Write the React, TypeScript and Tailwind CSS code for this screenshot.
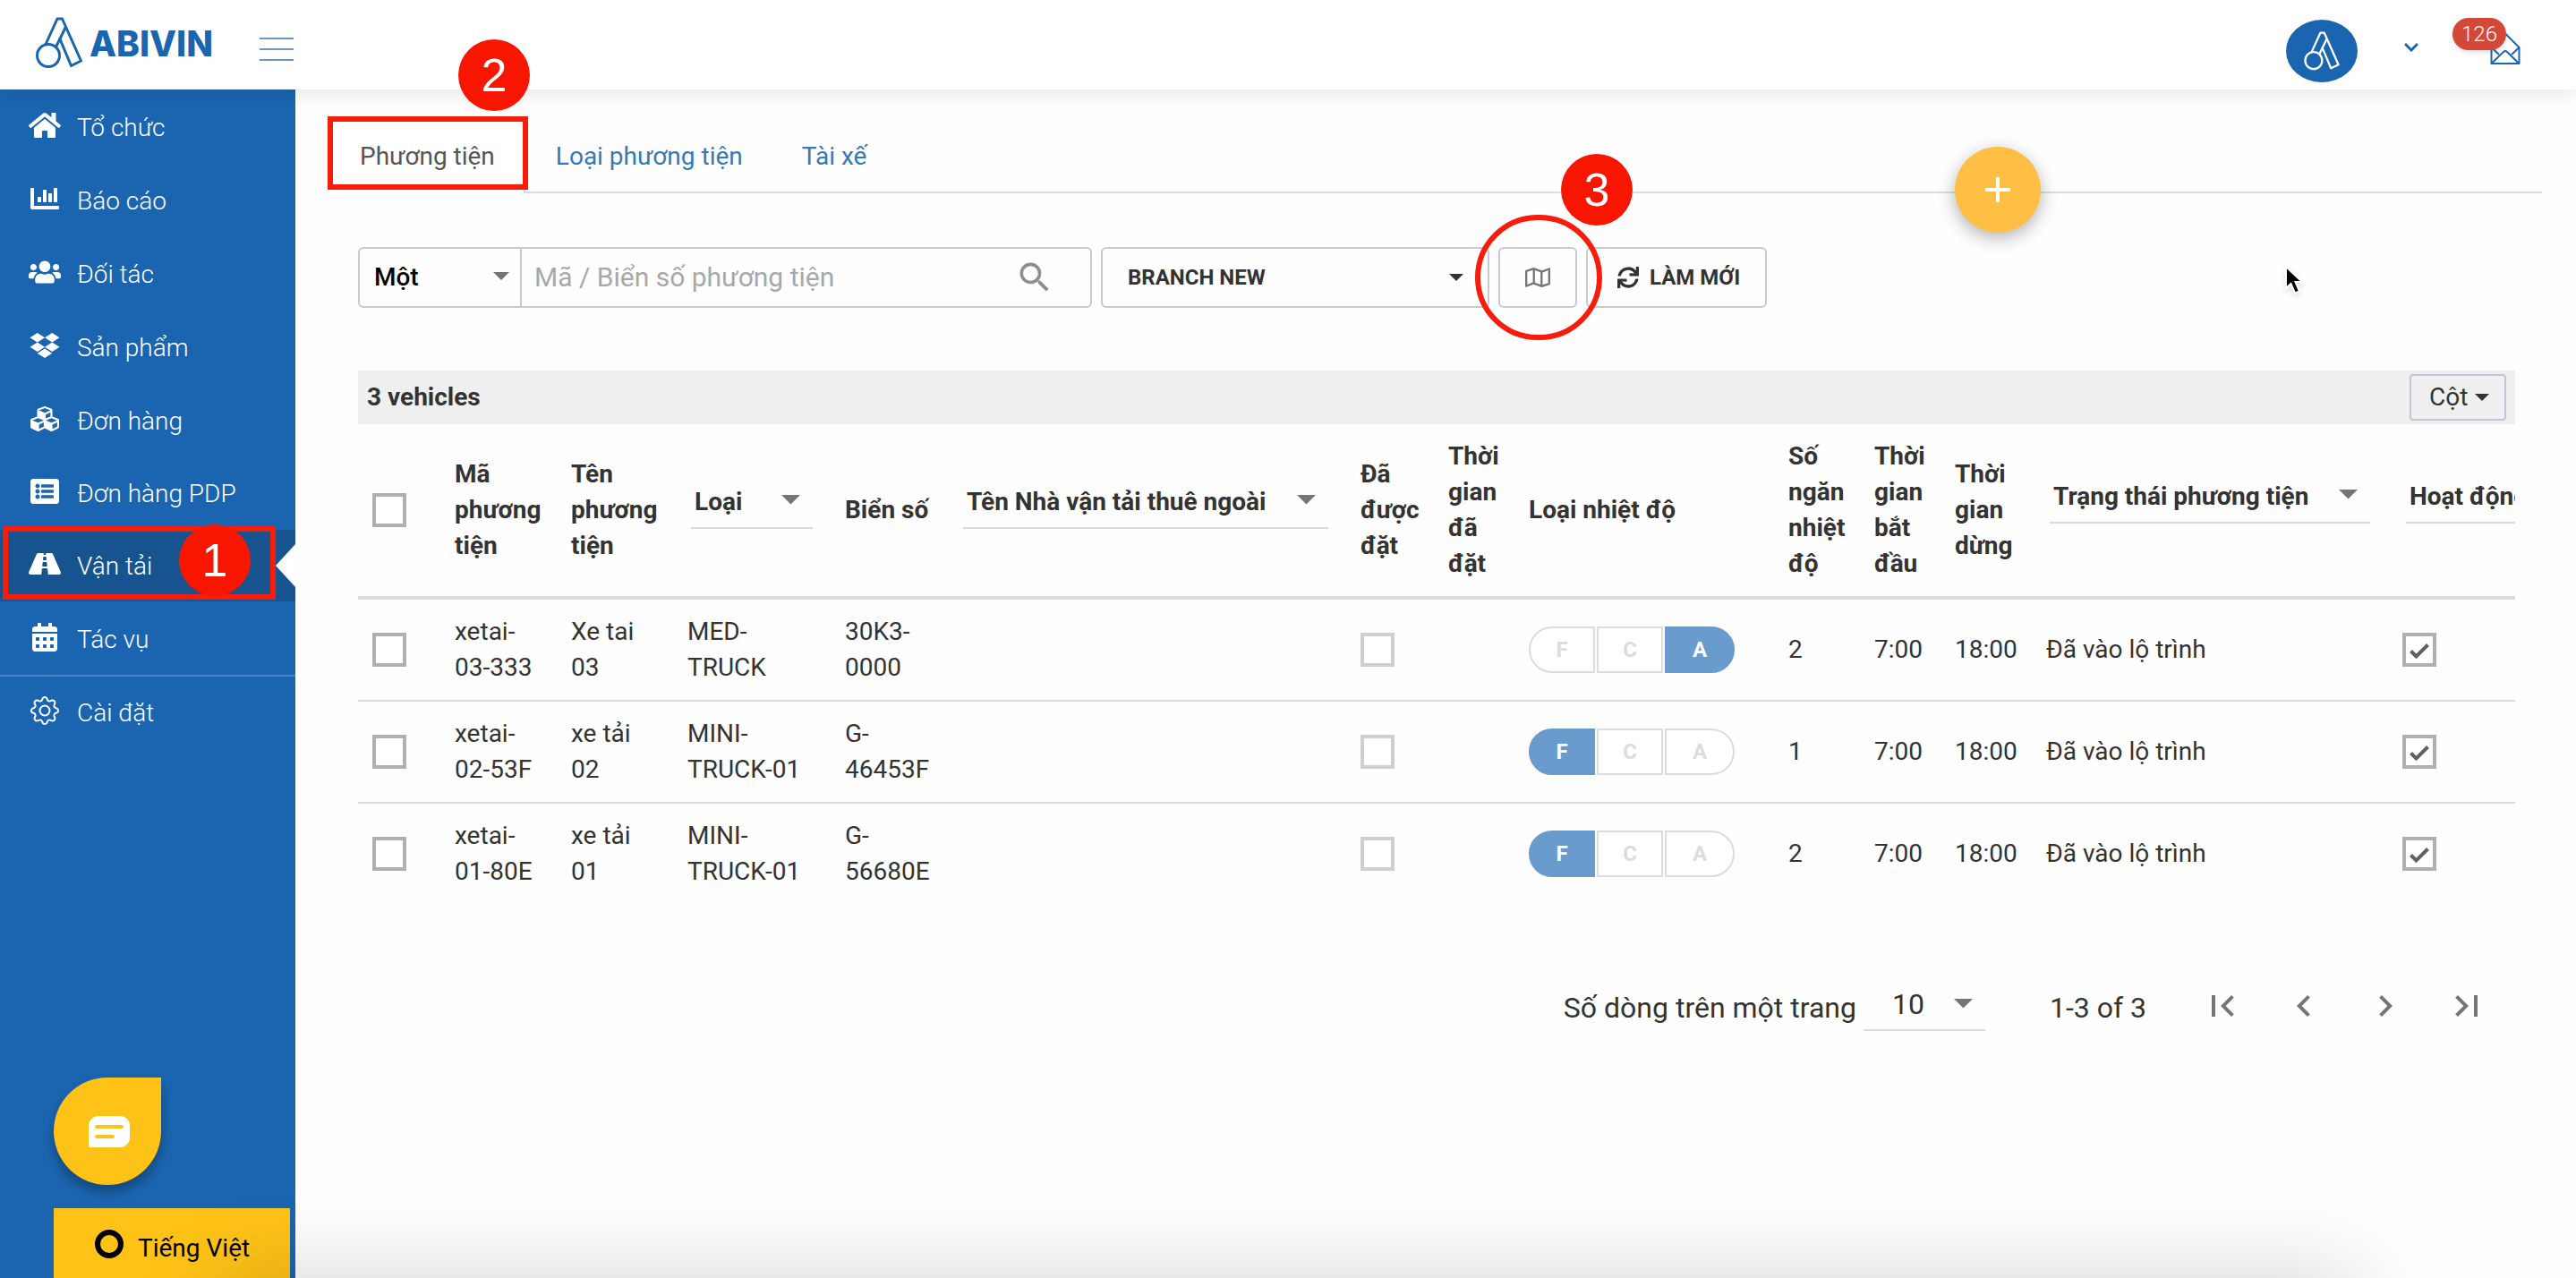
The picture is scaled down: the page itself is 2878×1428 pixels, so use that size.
import type { ReactNode } from "react";
import type { IconType } from "react-icons";
import {
  FaCalendarAlt,
  FaChartBar,
  FaChevronDown,
  FaCubes,
  FaDropbox,
  FaHome,
  FaListAlt,
  FaRegMap,
  FaRoad,
  FaSync,
  FaUsers,
} from "react-icons/fa";
import { BsGear } from "react-icons/bs";
import { MdAdd, MdChevronLeft, MdChevronRight, MdFirstPage, MdLastPage, MdSearch } from "react-icons/md";

type NavItem = { label: string; icon: IconType; active?: boolean; height?: string; divided?: boolean };

const navItems: NavItem[] = [
  { label: "Tổ chức", icon: FaHome },
  { label: "Báo cáo", icon: FaChartBar },
  { label: "Đối tác", icon: FaUsers },
  { label: "Sản phẩm", icon: FaDropbox },
  { label: "Đơn hàng", icon: FaCubes },
  { label: "Đơn hàng PDP", icon: FaListAlt, height: "h-20" },
  { label: "Vận tải", icon: FaRoad, active: true },
  { label: "Tác vụ", icon: FaCalendarAlt, divided: true },
  { label: "Cài đặt", icon: BsGear },
];

type Vehicle = {
  id: [string, string];
  name: [string, string];
  type: [string, string];
  plate: [string, string];
  temp: "F" | "C" | "A";
  compartments: number;
};

const vehicles: Vehicle[] = [
  { id: ["xetai-", "03-333"], name: ["Xe tai", "03"], type: ["MED-", "TRUCK"], plate: ["30K3-", "0000"], temp: "A", compartments: 2 },
  { id: ["xetai-", "02-53F"], name: ["xe tải", "02"], type: ["MINI-", "TRUCK-01"], plate: ["G-", "46453F"], temp: "F", compartments: 1 },
  { id: ["xetai-", "01-80E"], name: ["xe tải", "01"], type: ["MINI-", "TRUCK-01"], plate: ["G-", "56680E"], temp: "F", compartments: 2 },
];

function LogoMark({ className }: { className: string }) {
  return (
    <svg viewBox="0 0 52 58" className={className} fill="none" stroke="currentColor" strokeWidth="3" strokeLinejoin="round" aria-hidden="true">
      <circle cx="14" cy="43" r="12.500" />
      <path d="M11 30.500 L24 2 H29.500 L50.500 49 L39.500 54.500 L26.500 23.500" />
      <path d="M33.500 11 L22.500 33.500" />
    </svg>
  );
}

function Caret({ className }: { className: string }) {
  return (
    <svg viewBox="0 0 20 10" className={className} fill="currentColor" aria-hidden="true">
      <path d="M0 0h20L10 10z" />
    </svg>
  );
}

function Marker({ n, className }: { n: number; className: string }) {
  return (
    <span
      className={`pointer-events-none absolute z-20 flex size-20 items-center justify-center rounded-full bg-[#f81600] font-['Liberation_Sans',sans-serif] text-[52px] leading-none font-normal text-white ${className}`}
    >
      {n}
    </span>
  );
}

function Checkbox({ label, checked = false, disabled = false }: { label: string; checked?: boolean; disabled?: boolean }) {
  return (
    <span className="relative flex size-[38px]">
      <input
        type="checkbox"
        aria-label={label}
        defaultChecked={checked}
        disabled={disabled}
        className="peer size-[38px] appearance-none border-4 border-[#b0b0b0] bg-white disabled:border-[#cfcfcf]"
      />
      <svg viewBox="0 0 38 38" className="pointer-events-none absolute inset-0 hidden text-[#616161] peer-checked:block" fill="none" stroke="currentColor" strokeWidth="4" aria-hidden="true">
        <path d="M9.500 20.500 L15.500 26.500 L28.500 13.500" />
      </svg>
    </span>
  );
}

function HeaderSelect({ label, raised = false }: { label: string; raised?: boolean }) {
  return (
    <span className={`relative mx-1 block border-b-2 border-[#dcdcdc] ${raised ? "-mt-7" : "-mt-4"}`}>
      <select aria-label={label} className="block h-14 w-full appearance-none bg-transparent pl-1 font-bold">
        <option>{label}</option>
      </select>
      <Caret className="pointer-events-none absolute top-5 right-3.5 w-[21px] text-[#757575]" />
    </span>
  );
}

function TempPills({ value }: { value: Vehicle["temp"] }) {
  const shape = { F: "w-[74px] rounded-l-full", C: "w-[74px]", A: "w-[78px] rounded-r-full" };
  return (
    <span className="flex gap-0.5">
      {(["F", "C", "A"] as const).map((t) => (
        <button
          key={t}
          type="button"
          className={`h-[52px] border-2 text-2xl font-bold ${shape[t]} ${
            t === value ? "border-[#6a9bcd] bg-[#6a9bcd] text-white" : "border-[#dcdcdc] bg-white text-[#dcdcdc]"
          }`}
        >
          {t}
        </button>
      ))}
    </span>
  );
}

function Th({ children }: { children?: ReactNode }) {
  return <th className="p-4 text-left align-middle font-bold">{children}</th>;
}

function Td({ children }: { children?: ReactNode }) {
  return <td className="p-4 align-middle whitespace-nowrap">{children}</td>;
}

function Lines({ text }: { text: [string, string] }) {
  return (
    <>
      {text[0]}
      <br />
      {text[1]}
    </>
  );
}

function Header() {
  return (
    <header className="relative z-10 flex h-[100px] items-center bg-white pr-[62px] pl-10 text-[#1b65b0] shadow-[0_4px_20px_rgba(0,0,0,0.1)]">
      <a href="#home" className="flex items-center gap-2 pb-1" aria-label="ABIVIN">
        <LogoMark className="h-[58px] w-[52px]" />
        <span className="font-['Inter',sans-serif] text-[39px] leading-none font-extrabold">ABIVIN</span>
      </a>
      <button type="button" aria-label="Menu" className="ml-auto flex flex-col gap-2.5 xl:absolute xl:top-[42px] xl:left-[290px]">
        <span className="h-0.5 w-[38px] bg-[#6a95c6]" />
        <span className="h-0.5 w-[38px] bg-[#6a95c6]" />
        <span className="h-0.5 w-[38px] bg-[#6a95c6]" />
      </button>
      <button type="button" aria-label="Tài khoản" className="ml-auto flex items-center gap-[51px] pt-3.5">
        <span className="flex h-[70px] w-20 items-center justify-center rounded-[50%] bg-[#1b65b0] text-white">
          <LogoMark className="h-11 w-11" />
        </span>
        <FaChevronDown className="mb-2 size-[18px]" />
      </button>
      <button type="button" aria-label="Thông báo" className="relative ml-[79px] block pt-2">
        <svg viewBox="0 0 34 36" className="h-9 w-[34px]" fill="none" stroke="currentColor" strokeWidth="2" strokeLinejoin="round" aria-hidden="true">
          <path d="M1.500 17 L17 1.500 L32.500 17 V35 H1.500 Z" />
          <path d="M1.500 17 L10 25 M32.500 17 L24 25" />
          <path d="M1.500 35 L15 22 Q17 20 19 22 L32.500 35" />
        </svg>
        <span className="absolute -top-2 right-4 flex h-9 w-[60px] items-center justify-center rounded-full bg-[#d34836] text-2xl font-light text-white shadow-md">
          126
        </span>
      </button>
    </header>
  );
}

function Sidebar() {
  return (
    <aside className="relative flex w-[330px] shrink-0 flex-col bg-[#1b65b0]">
      <nav className="pt-0.5">
        {navItems.map(({ label, icon: Icon, active, height, divided }) => (
          <a
            key={label}
            href="#nav"
            className={`relative flex items-center gap-[18px] border-b-2 pl-8 font-light text-white ${height ?? "h-[82px]"} ${
              divided ? "border-[#4a85c1]" : "border-[#1b65b0]"
            } ${active ? "bg-[#17548f]" : ""}`}
          >
            <Icon className="-mt-1 h-8 w-9 shrink-0" />
            <span className="pt-0.5">{label}</span>
            {active && (
              <>
                <svg viewBox="0 0 22 48" className="absolute top-4 right-0 h-12 w-[22px]" fill="#fff" aria-hidden="true">
                  <path d="M22 0v48L0 24z" />
                </svg>
                <span className="pointer-events-none absolute -top-1 left-[3px] h-[82px] w-[305px] border-[6px] border-[#f81c0b]" />
                <Marker n={1} className="-top-1.5 left-[200px]" />
              </>
            )}
          </a>
        ))}
      </nav>
      <div className="mt-auto flex flex-col items-start gap-[26px] pl-[60px]">
        <button type="button" aria-label="Trò chuyện" className="flex size-[120px] items-center justify-center rounded-full rounded-tr-xl bg-[#ffc317] pl-1 shadow-[0_8px_14px_rgba(0,0,0,0.3)]">
          <svg viewBox="0 0 46 35" className="w-[46px]" aria-hidden="true">
            <path d="M11 0H35A11 11 0 0 1 46 11V24A11 11 0 0 1 35 35H2A2 2 0 0 1 0 33V11A11 11 0 0 1 11 0Z" fill="#fff" />
            <path d="M9 12H37M9 23H27" stroke="#ffc317" strokeWidth="4" strokeLinecap="round" />
          </svg>
        </button>
        <button type="button" className="flex h-[78px] w-[264px] items-center gap-4 bg-[#ffc317] pt-3 pl-[46px] text-black">
          <span className="-mt-2.5 size-8 rounded-full border-[6px] border-black" />
          Tiếng Việt
        </button>
      </div>
    </aside>
  );
}

function Tabs() {
  return (
    <div className="relative flex h-[82px] gap-0.5 border-b-2 border-[#dcdcdc] leading-[82px] text-[#337ab7]">
      <a href="#vehicles" className="relative h-[82px] border-r-2 border-[#dcdcdc] bg-white px-8 text-[#555]">
        Phương tiện
        <span className="pointer-events-none absolute -top-1 -left-1 h-[82px] w-[224px] border-[6px] border-[#f81c0b]" />
        <Marker n={2} className="-top-[90px] left-[142px]" />
      </a>
      <a href="#types" className="px-8">
        Loại phương tiện
      </a>
      <a href="#drivers" className="px-8">
        Tài xế
      </a>
      <button
        type="button"
        aria-label="Thêm"
        className="absolute top-[30px] right-[560px] z-10 flex size-24 items-center justify-center rounded-full bg-[#febf44] text-white shadow-[0_6px_20px_rgba(0,0,0,0.3)]"
      >
        <MdAdd className="size-12" />
      </button>
    </div>
  );
}

function Toolbar() {
  return (
    <div className="flex h-[68px] gap-2.5 text-[#333]">
      <div className="flex w-[820px] rounded-md border-2 border-[#c8cacc]">
        <span className="relative flex w-[181px] border-r-2 border-[#c8cacc]">
          <select aria-label="Chế độ tìm" className="w-full appearance-none bg-transparent pl-4 font-medium text-black">
            <option>Một</option>
          </select>
          <Caret className="pointer-events-none absolute top-[26px] right-3 w-[18px] text-[#757575]" />
        </span>
        <input
          type="text"
          aria-label="Mã / Biển số phương tiện"
          placeholder="Mã / Biển số phương tiện"
          className="min-w-0 flex-1 pl-3.5 text-[30px] outline-none placeholder:text-[#a8a8a8]"
        />
        <button type="button" aria-label="Tìm kiếm" className="mr-10 text-[#8a8f91]">
          <MdSearch className="size-11" />
        </button>
      </div>
      <span className="relative flex w-[434px] rounded-md border-2 border-[#c8cacc]">
        <select aria-label="Chi nhánh" className="w-full appearance-none bg-transparent pl-7 text-2xl font-bold">
          <option>BRANCH NEW</option>
        </select>
        <Caret className="pointer-events-none absolute top-7 right-[27px] w-4" />
      </span>
      <span className="relative flex w-[88px]">
        <button type="button" aria-label="Bản đồ" className="flex w-full items-center justify-center rounded-md border-2 border-[#c8cacc] text-[#757575]">
          <FaRegMap className="size-7" />
        </button>
        <span className="pointer-events-none absolute -top-9 -left-[26px] h-[140px] w-[142px] rounded-full border-[6px] border-[#f81c0b]" />
        <Marker n={3} className="-top-[104px] left-[70px]" />
      </span>
      <button type="button" className="flex w-[202px] items-center gap-3 rounded-md border-2 border-[#c8cacc] pl-[33px] text-2xl font-bold">
        <FaSync className="size-6" />
        LÀM MỚI
      </button>
      <svg viewBox="0 0 22 34" className="mt-5 ml-[568px] h-[34px] w-[22px] shrink-0 drop-shadow-md" aria-hidden="true">
        <path d="M2 2V26L7.500 21L12 31.500L17 29.500L12.500 19H20Z" fill="#000" stroke="#fff" strokeWidth="2" />
      </svg>
    </div>
  );
}

function VehicleTable() {
  return (
    <div className="overflow-hidden text-[#333]">
      <div className="flex h-[60px] items-center justify-between bg-[#efefef] px-2.5 font-bold">
        3 vehicles
        <button type="button" className="flex h-[52px] w-[108px] items-center gap-2 rounded border-2 border-[#c1c7d8] pl-5 font-normal">
          Cột
          <Caret className="w-4" />
        </button>
      </div>
      <div className="overflow-hidden">
        <table className="w-full min-w-[2498px] table-fixed border-collapse">
          <colgroup>
            <col className="w-[92px]" />
            <col className="w-[130px]" />
            <col className="w-[130px]" />
            <col className="w-[176px]" />
            <col className="w-[128px]" />
            <col className="w-[448px]" />
            <col className="w-[98px]" />
            <col className="w-[90px]" />
            <col className="w-[290px]" />
            <col className="w-[96px]" />
            <col className="w-[90px]" />
            <col className="w-[102px]" />
            <col className="w-[398px]" />
            <col className="w-[230px]" />
          </colgroup>
          <thead>
            <tr className="border-b-4 border-[#dcdcdc]">
              <Th>
                <Checkbox label="Chọn tất cả" />
              </Th>
              <Th>Mã phương tiện</Th>
              <Th>Tên phương tiện</Th>
              <Th>
                <HeaderSelect label="Loại" />
              </Th>
              <Th>Biển số</Th>
              <Th>
                <HeaderSelect label="Tên Nhà vận tải thuê ngoài" />
              </Th>
              <Th>Đã được đặt</Th>
              <Th>Thời gian đã đặt</Th>
              <Th>Loại nhiệt độ</Th>
              <Th>Số ngăn nhiệt độ</Th>
              <Th>Thời gian bắt đầu</Th>
              <Th>Thời gian dừng</Th>
              <Th>
                <HeaderSelect label="Trạng thái phương tiện" raised />
              </Th>
              <Th>
                <HeaderSelect label="Hoạt động" raised />
              </Th>
            </tr>
          </thead>
          <tbody>
            {vehicles.map((v) => (
              <tr key={v.id[1]} className="border-b-2 border-[#dcdcdc] last:border-b-0">
                <Td>
                  <Checkbox label={`Chọn ${v.id.join("")}`} />
                </Td>
                <Td>
                  <Lines text={v.id} />
                </Td>
                <Td>
                  <Lines text={v.name} />
                </Td>
                <Td>
                  <Lines text={v.type} />
                </Td>
                <Td>
                  <Lines text={v.plate} />
                </Td>
                <Td />
                <Td>
                  <Checkbox label="Đã được đặt" disabled />
                </Td>
                <Td />
                <Td>
                  <TempPills value={v.temp} />
                </Td>
                <Td>{v.compartments}</Td>
                <Td>7:00</Td>
                <Td>18:00</Td>
                <Td>Đã vào lộ trình</Td>
                <Td>
                  <Checkbox label="Hoạt động" checked />
                </Td>
              </tr>
            ))}
          </tbody>
        </table>
      </div>
    </div>
  );
}

function Pagination() {
  return (
    <div className="mt-[84px] flex items-center justify-end pr-[30px] text-[32px] text-[#333]">
      <label htmlFor="page-size" className="pt-1.5">
        Số dòng trên một trang
      </label>
      <span className="relative ml-2 flex w-[136px] border-b-2 border-[#dcdcdc]">
        <select id="page-size" className="h-14 w-full appearance-none bg-transparent pl-8">
          <option>10</option>
        </select>
        <Caret className="pointer-events-none absolute top-[22px] right-3.5 w-[21px] text-[#757575]" />
      </span>
      <span className="mr-[61px] ml-[72px] pt-1.5">1-3 of 3</span>
      <span className="flex gap-[43px] pt-0.5 text-[#757575]">
        {[MdFirstPage, MdChevronLeft, MdChevronRight, MdLastPage].map((Icon, i) => (
          <button key={i} type="button" aria-label={["Trang đầu", "Trang trước", "Trang sau", "Trang cuối"][i]}>
            <Icon className="size-12" />
          </button>
        ))}
      </span>
    </div>
  );
}

export default function App() {
  return (
    <div className="relative flex min-h-screen flex-col overflow-hidden bg-[#fefefe] font-['Roboto',sans-serif] text-[28px] leading-10">
      <Header />
      <div className="flex flex-1">
        <Sidebar />
        <main className="min-w-0 flex-1 pt-[34px] pr-[38px] pl-10">
          <Tabs />
          <div className="px-[30px] pt-[60px]">
            <Toolbar />
            <div className="mt-[70px]">
              <VehicleTable />
            </div>
            <Pagination />
          </div>
        </main>
      </div>
      <div className="pointer-events-none absolute top-full right-[250px] left-[250px] z-20 h-24 shadow-[0_0_100px_rgba(0,0,0,0.18)]" />
    </div>
  );
}
